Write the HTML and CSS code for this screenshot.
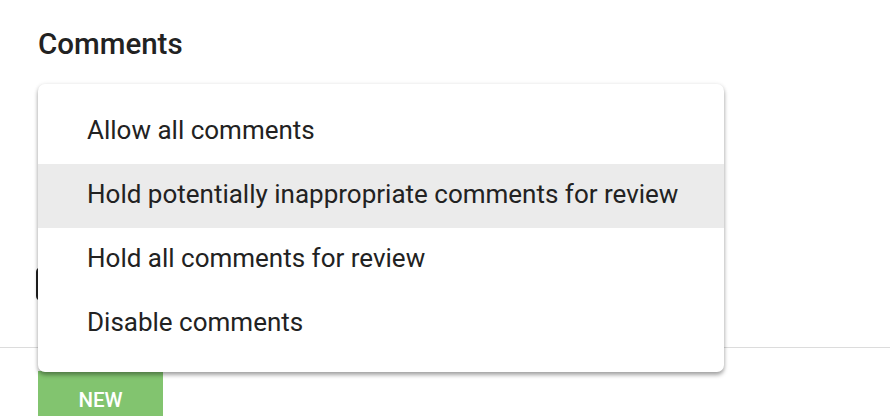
FILE: index.html
```
<!DOCTYPE html>
<html lang="en">
<head>
    <meta charset="UTF-8">
    <meta name="viewport" content="width=device-width, initial-scale=1.0">
    <title>Comments</title>
    <link rel="stylesheet" href="styles.css">
</head>
<body>
    <div class="settings">
        <h2 class="section-title">Comments</h2>

        <div class="field">
            <div class="select-box"></div>

            <!-- open dropdown over the select -->
            <ul class="menu">
                <li class="menu-item">Allow all comments</li>
                <li class="menu-item selected">Hold potentially inappropriate comments for review</li>
                <li class="menu-item">Hold all comments for review</li>
                <li class="menu-item">Disable comments</li>
            </ul>
        </div>
    </div>

    <div class="footer">
        <button class="btn-new">NEW</button>
    </div>
</body>
</html>
```

FILE: styles.css
```
body {
  margin: 0;
  padding: 0;
  background: #fff;
  font-family: Roboto, "Noto Sans", sans-serif;
  color: #222;
}

.settings {
  padding: 0 0 0 38px;
  height: 348px;
  border-bottom: 1px solid #dcdcdc;
  box-sizing: border-box;
}

.section-title {
  margin: 0;
  padding-top: 27px;
  font-size: 29.5px;
  font-weight: 500;
  line-height: 34px;
  color: #222;
}

.field {
  position: relative;
  padding-top: 206px;
}

.select-box {
  width: 300px;
  height: 30px;
  margin-left: -2px;
  border: 2px solid #222;
  border-radius: 5px;
}

.menu {
  position: absolute;
  top: 23px;
  left: 0;
  width: 686px;
  margin: 0;
  padding: 16px 0;
  list-style: none;
  background: #fff;
  border-radius: 7px;
  box-shadow: 0 3px 4px rgba(0, 0, 0, 0.35), 0 0 4px rgba(0, 0, 0, 0.08);
  z-index: 2;
}

.menu-item {
  height: 64px;
  line-height: 61px;
  padding-left: 49px;
  font-size: 26px;
  color: #222;
}

.menu-item.selected {
  background: #ebebeb;
}

.footer {
  padding: 23px 0 0 38px;
}

.btn-new {
  width: 125px;
  height: 58px;
  padding: 0;
  border: none;
  background: #82c46f;
  color: #fff;
  font-family: Roboto, sans-serif;
  font-size: 20.5px;
  line-height: 20px;
  font-weight: 500;
  vertical-align: top;
}
```
